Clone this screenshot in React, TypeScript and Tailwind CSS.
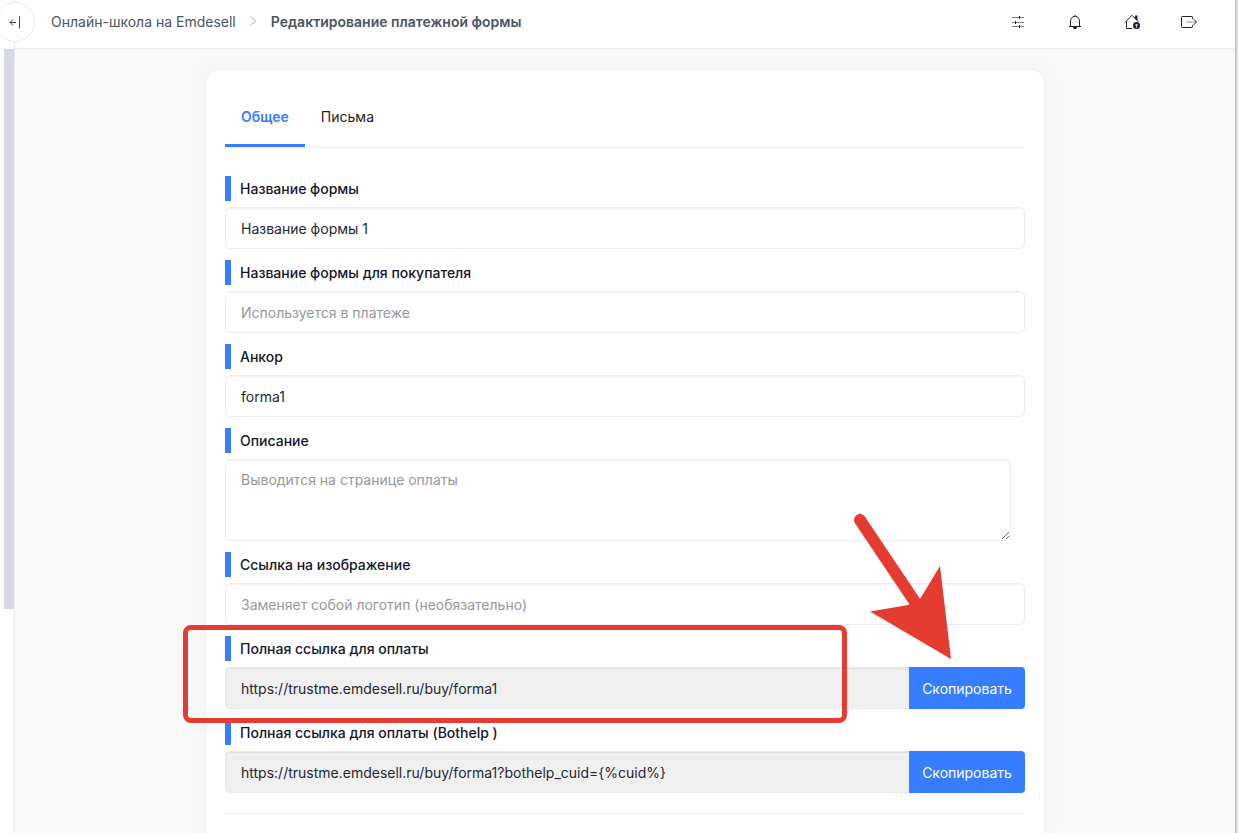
import { useState, type ReactNode } from "react";

function SlidersIcon() {
  return (
    <svg width="14" height="14" viewBox="0 0 14 14" fill="none" stroke="#7b7f88" strokeWidth="1" aria-hidden="true">
      <path d="M1 2.500h12M1 7.500h12M1 11.500h12" />
      <path d="M8.500 1v3M4.500 6v3M8.500 10v3" stroke="#1c2038" />
    </svg>
  );
}

function BellIcon() {
  return (
    <svg width="14" height="16" viewBox="0 0 14 16" fill="none" stroke="#1c2038" strokeWidth="1" aria-hidden="true">
      <path d="M1 12.500h12M2.500 12.500V8C2.500 4.500 4 2.500 7 2.200c3 .3 4.500 2.300 4.500 5.800v4.500M7 2.200V1" />
      <path d="M5.200 13.500c.3 1.400 3.300 1.400 3.600 0z" fill="#1c2038" />
    </svg>
  );
}

function HomeIcon() {
  return (
    <svg width="17" height="16" viewBox="0 0 17 16" fill="none" stroke="#1c2038" strokeWidth="1" aria-hidden="true">
      <path d="M.8 8.500 8 1.300l6.500 6.500M2.500 7.500v7h6" />
      <path d="M11 1.500h2.500v5.500L11 4.500z" fill="#1c2038" stroke="none" />
      <circle cx="12.500" cy="11.500" r="3.500" fill="#1c2038" stroke="none" />
      <path d="M12.500 13.700v-3.500M11 11.500l1.500-1.500 1.500 1.500" stroke="#fff" strokeWidth=".8" />
    </svg>
  );
}

function ExitIcon() {
  return (
    <svg width="18" height="14" viewBox="0 0 18 14" fill="none" stroke="#1c2038" strokeWidth="1" aria-hidden="true">
      <path d="M12.500 4V2.200q0-.7-.7-.7H2.200q-.7 0-.7.7v9.600q0 .7.7.7h9.600q.7 0 .7-.7V10" />
      <path d="M6.500 7h10" stroke="#8b8f9a" />
      <path d="m13.500 4 3 3-3 3" />
    </svg>
  );
}

function CollapseIcon() {
  return (
    <svg width="12" height="13" viewBox="0 0 12 13" fill="none" stroke="#3f4350" strokeWidth="1" aria-hidden="true">
      <path d="M7 6.500H1M4 3.500l-3 3 3 3" />
      <path d="M10.500.5v12" />
    </svg>
  );
}

const inputClass =
  "block h-[42px] w-full min-w-0 rounded-[5px] border border-[#ebecf1] bg-white px-[15px] text-[14px] text-[#25272f] shadow-[inset_0_1px_1px_rgba(0,0,0,0.06)] outline-none placeholder:text-[#96989c]";

function Field({ id, label, children }: { id: string; label: string; children: ReactNode }) {
  return (
    <div className="relative flex flex-col gap-[6px]">
      <label
        htmlFor={id}
        className="border-l-[6px] border-[#377dff] pl-[9px] text-[14px] leading-[25px] font-medium text-[#14162b]"
      >
        {label}
      </label>
      {children}
    </div>
  );
}

function CopyRow({ id, value }: { id: string; value: string }) {
  return (
    <div className="flex">
      <input
        id={id}
        readOnly
        value={value}
        className="block h-[42px] min-w-0 flex-1 rounded-l-[5px] border border-r-0 border-[#e7e8ec] bg-[#f0f0f0] px-[15px] text-[14px] text-[#25272f] shadow-[inset_0_1px_1px_rgba(0,0,0,0.08)] outline-none"
      />
      <button
        type="button"
        onClick={() => navigator.clipboard?.writeText(value)}
        className="w-[116px] rounded-r-[4px] bg-[#377dff] text-[14px] text-white"
      >
        Скопировать
      </button>
    </div>
  );
}

export default function App() {
  const [tab, setTab] = useState("general");
  const tabClass = "h-[57px] border-b-[3px] px-4 pb-[2px] text-[14px]";
  return (
    <div className="flex min-h-screen bg-[#f9f9f9] font-['Inter',sans-serif] text-[#1e2022]">
      <aside className="relative w-[15px] shrink-0 border-r border-[#ebecf2] bg-white pt-[49px] pl-1">
        <div className="h-[560px] bg-[#d5dae2]" />
        <button
          type="button"
          aria-label="Свернуть меню"
          className="absolute top-[2px] -left-[5px] flex size-10 items-center justify-center rounded-full border border-[#ebecf2] bg-white"
        >
          <CollapseIcon />
        </button>
      </aside>

      <div className="flex min-w-0 flex-1 flex-col">
        <header className="flex h-[49px] items-center justify-between border-b border-[#ebecf2] bg-white pr-[26px] pb-1 pl-9 text-[14px] text-[#4c5560]">
          <nav aria-label="Навигация" className="flex items-center gap-[13px] pb-[2px]">
            <a href="#school">Онлайн-школа на Emdesell</a>
            <svg width="9" height="12" viewBox="0 0 9 12" fill="none" stroke="#a5a9b0" strokeWidth="1" aria-hidden="true">
              <path d="m1.500 1.500 5 4.500-5 4.500" />
            </svg>
            <span className="font-semibold">Редактирование платежной формы</span>
          </nav>
          <div className="flex gap-[17px]">
            <button type="button" aria-label="Настройки" className="flex h-8 w-10 items-center justify-center">
              <SlidersIcon />
            </button>
            <button type="button" aria-label="Уведомления" className="flex h-8 w-10 items-center justify-center">
              <BellIcon />
            </button>
            <button type="button" aria-label="Главная" className="flex h-8 w-10 items-center justify-center">
              <HomeIcon />
            </button>
            <button type="button" aria-label="Выйти" className="flex h-8 w-10 items-center justify-center">
              <ExitIcon />
            </button>
          </div>
        </header>

        <main className="flex flex-1 flex-col px-5 pt-5">
          <section className="mx-auto w-full max-w-[840px] flex-1 rounded-t-[14px] border border-b-0 border-[#efeff2] bg-white px-[19px] pt-5 shadow-[0_0_16px_rgba(140,152,164,0.07)]">
            <div role="tablist" className="flex border-b border-[#ebecef]">
              <button
                type="button"
                role="tab"
                aria-selected={tab === "general"}
                onClick={() => setTab("general")}
                className={`${tabClass} ${tab === "general" ? "border-[#377dff] font-semibold text-[#377dff]" : "border-transparent"}`}
              >
                Общее
              </button>
              <button
                type="button"
                role="tab"
                aria-selected={tab === "letters"}
                onClick={() => setTab("letters")}
                className={`${tabClass} ${tab === "letters" ? "border-[#377dff] font-semibold text-[#377dff]" : "border-transparent"}`}
              >
                Письма
              </button>
            </div>

            <form className="mt-7 flex flex-col gap-[11px]">
              <Field id="name" label="Название формы">
                <input id="name" defaultValue="Название формы 1" className={inputClass} />
              </Field>
              <Field id="public-name" label="Название формы для покупателя">
                <input id="public-name" placeholder="Используется в платеже" className={inputClass} />
              </Field>
              <Field id="anchor" label="Анкор">
                <input id="anchor" defaultValue="forma1" className={inputClass} />
              </Field>
              <Field id="description" label="Описание">
                <div className="flex pr-[14px]">
                  <textarea
                    id="description"
                    placeholder="Выводится на странице оплаты"
                    className="block h-[82px] w-full resize rounded-[5px] border border-[#ebecf1] bg-white px-[15px] py-[10px] text-[14px] leading-5 shadow-[inset_0_1px_1px_rgba(0,0,0,0.06)] outline-none placeholder:text-[#96989c]"
                  />
                </div>
              </Field>
              <Field id="image" label="Ссылка на изображение">
                <input id="image" placeholder="Заменяет собой логотип (необязательно)" className={inputClass} />
              </Field>
              <Field id="link" label="Полная ссылка для оплаты">
                <CopyRow id="link" value="https://trustme.emdesell.ru/buy/forma1" />
                <div className="pointer-events-none absolute -top-[11px] right-[178px] -bottom-[14px] -left-[42px] z-10 rounded-[8px] border-[5px] border-[#e63b31]" />
                <svg
                  className="pointer-events-none absolute right-[73px] bottom-[50px] z-10"
                  width="100"
                  height="148"
                  viewBox="0 0 100 148"
                  aria-hidden="true"
                >
                  <path d="M8 9 65 94" stroke="#e63b31" strokeWidth="12" strokeLinecap="round" />
                  <path d="M88 55 99 148 18 100.500l38-6.500 12-6z" fill="#e63b31" />
                </svg>
              </Field>
              <Field id="bothelp" label="Полная ссылка для оплаты (Bothelp )">
                <CopyRow id="bothelp" value="https://trustme.emdesell.ru/buy/forma1?bothelp_cuid={%cuid%}" />
              </Field>
            </form>
            <hr className="mt-5 border-[#e9ebee]" />
          </section>
        </main>
      </div>
      <div className="w-[3px] shrink-0 border-l border-[#bdbdbd] bg-[#dcdcdc]" />
    </div>
  );
}
